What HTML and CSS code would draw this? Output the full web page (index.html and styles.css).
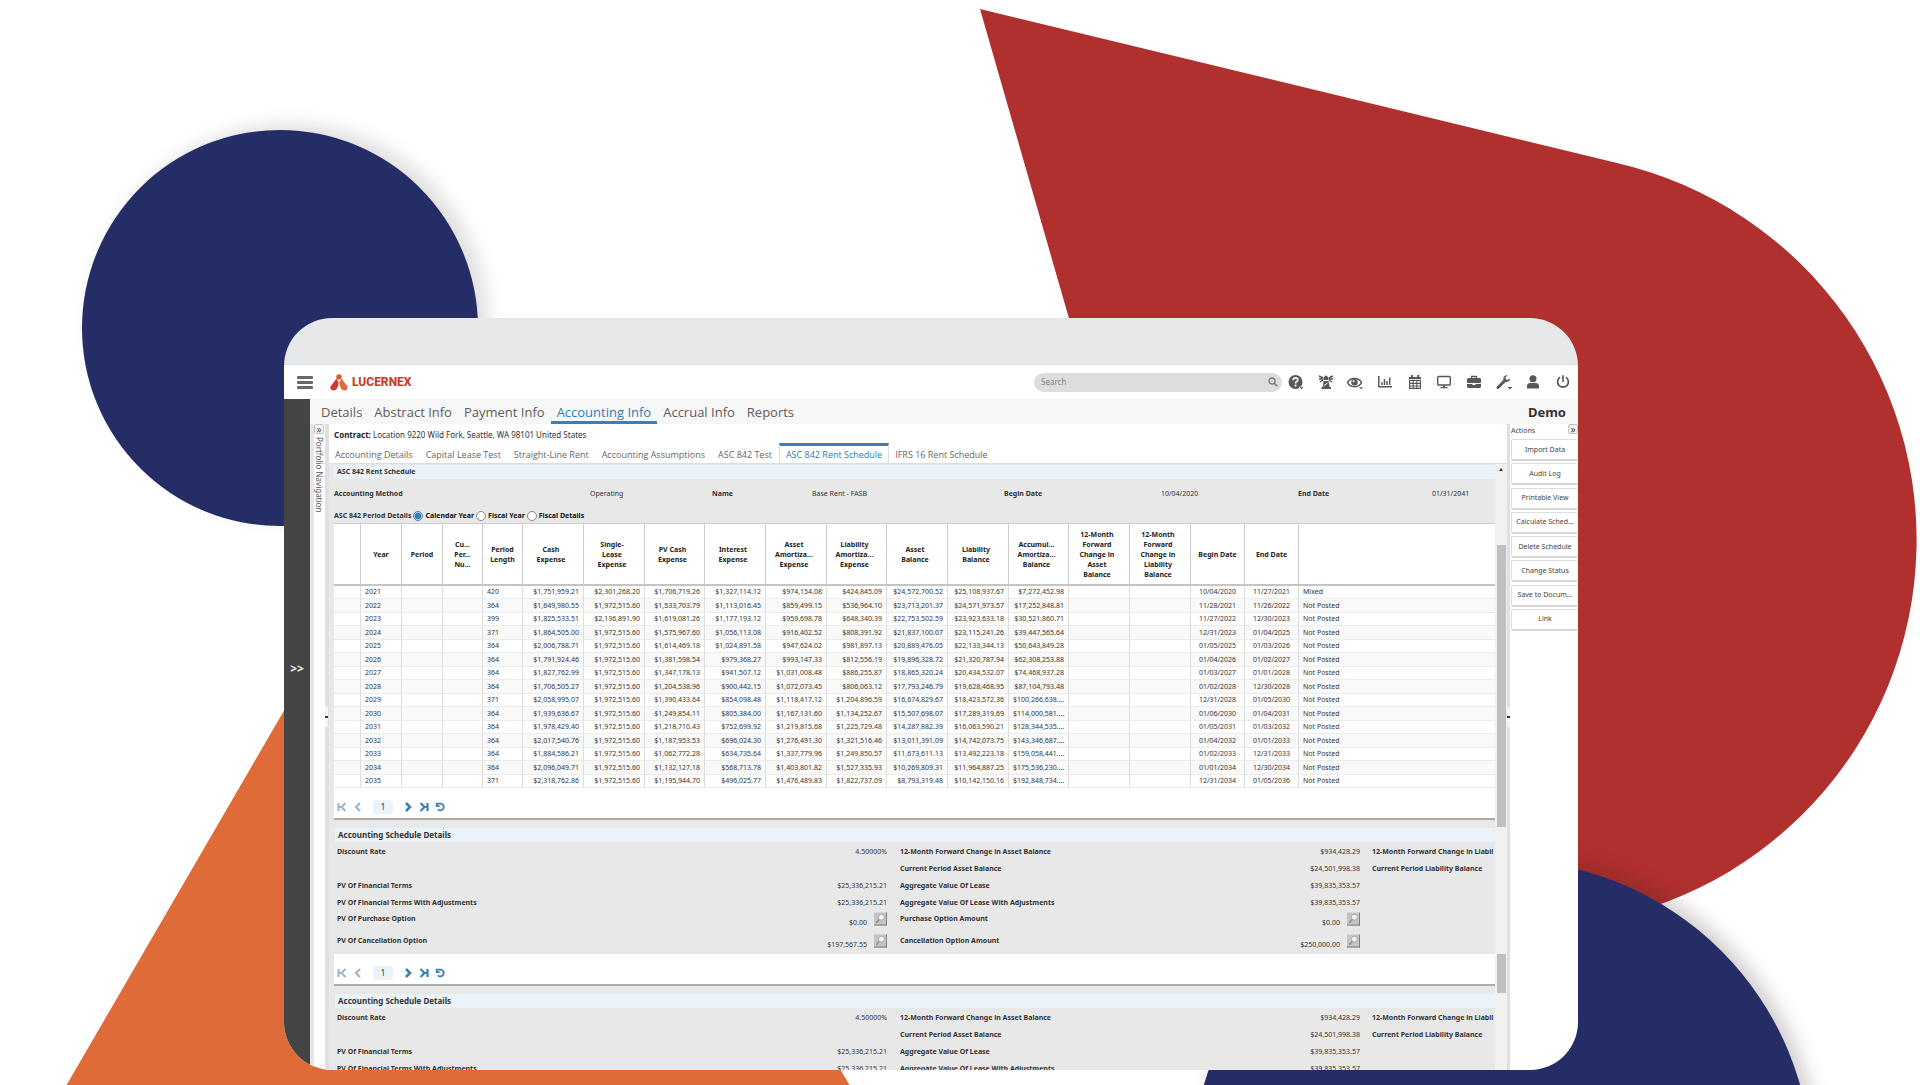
FILE: index.html
```html
<!DOCTYPE html>
<html lang="en">
<head>
<meta charset="utf-8">
<title>Lucernex – ASC 842 Rent Schedule</title>
<link rel="stylesheet" href="styles.css">
</head>
<body>
<svg class="backdrop" viewBox="0 0 1920 1085" preserveAspectRatio="xMidYMid slice" aria-hidden="true">
  <defs>
    <filter id="soft" x="-20%" y="-20%" width="140%" height="140%"><feGaussianBlur stdDeviation="9"/></filter>
  </defs>
  <circle cx="290" cy="322" r="198" fill="#3a2a2a" opacity=".15" filter="url(#soft)"/>
  <circle cx="280" cy="328" r="198" fill="#252d66"/>
  <path d="M980 9 L1617 163 A387 387 0 0 1 1529 927 L1244 927 Z" fill="#b0302e"/>
  <circle cx="1510" cy="1164" r="310" fill="#3a1a1a" opacity=".2" filter="url(#soft)"/>
  <circle cx="1502" cy="1170" r="310" fill="#252d66"/>
  <path d="M458 411 L850 1086 H66 Z" fill="#df6c38"/>
</svg>

<svg class="sprite" aria-hidden="true">
  <symbol id="i-first" viewBox="0 0 10 10"><path d="M1.5 1v8M8.5 1 4.500 5l4 4M2 5h3" fill="none" stroke="currentColor" stroke-width="2"/></symbol>
  <symbol id="i-prev" viewBox="0 0 10 10"><path d="M7 1 3 5l4 4" fill="none" stroke="currentColor" stroke-width="2.200"/></symbol>
  <symbol id="i-next" viewBox="0 0 10 10"><path d="M3 1l4 4-4 4" fill="none" stroke="currentColor" stroke-width="2.600"/></symbol>
  <symbol id="i-last" viewBox="0 0 10 10"><path d="M8.500 1v8M1.500 1l4 4-4 4M5 5h3" fill="none" stroke="currentColor" stroke-width="2.200"/></symbol>
  <symbol id="i-reload" viewBox="0 0 10 10"><path d="M.8 1.600h4.700a3.400 3.400 0 1 1-2.700 5.600M1.600.8v3.400h3" fill="none" stroke="currentColor" stroke-width="1.700"/></symbol>
  <symbol id="i-lens" viewBox="0 0 14 14"><path d="M0 0h14v14H0z" fill="#c4c4c4"/><path d="M0 13.500h14M13.500 0v14" stroke="#777"/><circle cx="8" cy="5" r="3.200" fill="#eef3f6" stroke="#9a9a9a" stroke-width=".8"/><path d="M5.600 7.600 2.500 11" stroke="#8a8a8a" stroke-width="1.500"/></symbol>
</svg>

<div class="device">
  <header class="topbar">
    <button class="menu" aria-label="Menu"><span></span><span></span><span></span></button>
    <a class="logo" href="#">
      <svg viewBox="0 0 18 17" width="18" height="17" aria-hidden="true"><circle cx="9" cy="3" r="2.800" fill="#df5a30"/><path d="M6.500 4.500 8.600 8.500C8.500 12 7 16.500 3.500 16.500 1 16.500-.2 14.500.6 12.500Z" fill="#cf3a2b"/><path d="M11.500 4.500 9.400 8.500C9.500 12 11 16.500 14.500 16.500c2.500 0 3.700-2 2.900-4Z" fill="#df6c38"/></svg>
      <span>LUCERNEX</span>
    </a>
    <label class="search">
      <input type="text" placeholder="Search" aria-label="Search">
      <svg viewBox="0 0 10 10" width="10" height="10"><circle cx="4" cy="4" r="3" fill="none" stroke="#777" stroke-width="1.300"/><path d="m6.300 6.300 3 3" stroke="#777" stroke-width="1.500"/></svg>
    </label>
    <nav class="tools" aria-label="Tools">
      <button aria-label="Help"><svg viewBox="0 0 18 16"><circle cx="8.500" cy="8" r="7" fill="#55585c"/><path d="M6.100 6.200C6.100 3 11.100 3.200 10.900 6 10.700 7.600 8.500 7.600 8.500 9.400" fill="none" stroke="#fff" stroke-width="1.700"/><circle cx="8.500" cy="11.600" r="1.100" fill="#fff"/><path d="M12 13h5l-2.500 2.500z" fill="#55585c" stroke="#fff" stroke-width=".5"/></svg></button>
      <button aria-label="Beacon"><svg viewBox="0 0 18 16"><path d="M6.500 3.500 9 1.200l2.500 2.300V6h-5zM6.500 7h5l1.200 6H14v2H4.500v-2h1.200z" fill="#55585c"/><path d="M2 2l4 2M2 5h4M3 8l3-2M16 2l-4 2M16 5h-4M15 8l-3-2" stroke="#55585c" stroke-width="1.400"/><path d="m6.500 12 4-3" stroke="#fff"/></svg></button>
      <button aria-label="View"><svg viewBox="0 0 18 16"><path d="M1.500 8.500C4 3 13 3 15.500 8.500 13 14 4 14 1.500 8.500Z" fill="#fff" stroke="#55585c" stroke-width="1.500"/><circle cx="8.500" cy="8.300" r="3.200" fill="#55585c"/><circle cx="7.600" cy="7.300" r="1" fill="#fff"/><path d="M12.500 13h5L15 15.500z" fill="#55585c" stroke="#fff" stroke-width=".5"/></svg></button>
      <button aria-label="Charts"><svg viewBox="0 0 18 16"><path d="M2.800 2v10.800H16" fill="none" stroke="#55585c" stroke-width="1.500"/><path d="M6 11V8M8.500 11V5M11 11V7M13.700 11V3.500" stroke="#55585c" stroke-width="1.500"/></svg></button>
      <button aria-label="Calendar"><svg viewBox="0 0 18 16"><path d="M3 3h12v12H3z" fill="#55585c"/><path d="M5.800 1v3M12.200 1v3" stroke="#55585c" stroke-width="2"/><path d="M4.200 7h2.500v1.700H4.200zm3.600 0h2.500v1.700H7.800zm3.600 0h2.500v1.700h-2.500zm-7.200 3h2.500v1.400H4.200zm3.600 0h2.500v1.400H7.800zm3.600 0h2.500v1.400h-2.500zm-7.200 2.500h2.500v1.300H4.200zm3.600 0h2.500v1.300H7.800zm3.600 0h2.500v1.300h-2.500zM3 5h12v.8H3z" fill="#fff"/></svg></button>
      <button aria-label="Display"><svg viewBox="0 0 18 16"><rect x="2.700" y="2.500" width="12.600" height="8.500" rx=".8" fill="none" stroke="#55585c" stroke-width="1.400"/><path d="M8 11h2v2h2.500v1.200h-7V13H8z" fill="#55585c"/></svg></button>
      <button aria-label="Portfolio"><svg viewBox="0 0 18 16"><path d="M6.500 4V2.500h5V4" fill="none" stroke="#55585c" stroke-width="1.400"/><path d="M3.500 4h11A1.500 1.500 0 0 1 16 5.500V9H2V5.500A1.500 1.500 0 0 1 3.500 4ZM2 10h5.500v1h3v-1H16v2.500a1.500 1.500 0 0 1-1.500 1.500h-11A1.500 1.500 0 0 1 2 12.500Z" fill="#55585c"/></svg></button>
      <button aria-label="Settings"><svg viewBox="0 0 18 16"><path d="m3 13.500 7-7" stroke="#55585c" stroke-width="3" stroke-linecap="round"/><path d="M14.800 4.200 12.500 6 10.700 5.200l-.2-2L12.500 1.300C9.500.8 7.500 3.500 8.600 6.200c1 2.300 4 2.400 5.400.8.800-.9 1-1.800.8-2.800Z" fill="#55585c"/><path d="M12.500 13h5L15 15.500z" fill="#55585c"/></svg></button>
      <button aria-label="Account"><svg viewBox="0 0 18 16"><circle cx="9" cy="4.800" r="3.500" fill="#55585c"/><path d="M3 14.500V12c0-2 1.500-3 3-3h6c1.500 0 3 1 3 3v2.500z" fill="#55585c"/></svg></button>
      <button aria-label="Log out"><svg viewBox="0 0 18 16"><path d="M6 3.300a5.400 5.400 0 1 0 6 0M9 1.300v6.500" fill="none" stroke="#55585c" stroke-width="1.700"/></svg></button>
    </nav>
  </header>

  <div class="body">
    <aside class="rail"><button aria-label="Expand">&gt;&gt;</button></aside>
    <div class="app">
      <nav class="tabs" aria-label="Sections">
        <a href="#">Details</a><a href="#">Abstract Info</a><a href="#">Payment Info</a><a href="#" class="active">Accounting Info</a><a href="#">Accrual Info</a><a href="#">Reports</a>
        <strong>Demo</strong>
      </nav>
      <div class="columns">
        <aside class="portfolio"><button class="fold" aria-label="Open panel">»</button><span>Portfolio Navigation</span></aside>
        <div class="splitter"><i></i></div>
        <main>
          <p class="contract"><b>Contract:</b> Location 9220 Wild Fork, Seattle, WA 98101 United States</p>
          <nav class="subtabs" aria-label="Accounting">
            <a href="#">Accounting Details</a><a href="#">Capital Lease Test</a><a href="#">Straight-Line Rent</a><a href="#">Accounting Assumptions</a><a href="#">ASC 842 Test</a><a href="#" class="active">ASC 842 Rent Schedule</a><a href="#">IFRS 16 Rent Schedule</a>
          </nav>
          <div class="workspace">
            <div class="pane">
              <h2 class="band">ASC 842 Rent Schedule</h2>
              <dl class="summary">
                <dt>Accounting Method</dt><dd>Operating</dd><dt>Name</dt><dd>Base Rent - FASB</dd><dt>Begin Date</dt><dd>10/04/2020</dd><dt>End Date</dt><dd>01/31/2041</dd>
              </dl>
              <div class="period">
                <span>ASC 842 Period Details</span>
                <label><input type="radio" name="period" checked>Calendar Year</label>
                <label><input type="radio" name="period">Fiscal Year</label>
                <label><input type="radio" name="period">Fiscal Details</label>
              </div>
              <table class="grid">
                <colgroup><col class="c-pick"><col class="c-short" span="2"><col class="c-flag" span="2"><col class="c-money" span="2"><col class="c-sum"><col class="c-money" span="2"><col class="c-sum"><col class="c-money" span="2"><col class="c-sum"><col class="c-money" span="2"><col class="c-date" span="2"><col></colgroup>
                <thead><tr><th><th>Year<th>Period<th>Cu...<br>Per...<br>Nu...<th>Period<br>Length<th>Cash<br>Expense<th>Single-<br>Lease<br>Expense<th>PV Cash<br>Expense<th>Interest<br>Expense<th>Asset<br>Amortiza...<br>Expense<th>Liability<br>Amortiza...<br>Expense<th>Asset<br>Balance<th>Liability<br>Balance<th>Accumul...<br>Amortiza...<br>Balance<th>12-Month<br>Forward<br>Change in<br>Asset<br>Balance<th>12-Month<br>Forward<br>Change in<br>Liability<br>Balance<th>Begin Date<th>End Date<th></thead>
                <tbody>
                <tr><td><td>2021<td><td><td>420<td>$1,751,959.21<td>$2,301,268.20<td>$1,706,719.26<td>$1,327,114.12<td>$974,154.08<td>$424,845.09<td>$24,572,700.52<td>$25,108,937.67<td>$7,272,452.98<td><td><td>10/04/2020<td>11/27/2021<td>Mixed
                <tr><td><td>2022<td><td><td>364<td>$1,649,980.55<td>$1,972,515.60<td>$1,533,703.79<td>$1,113,016.45<td>$859,499.15<td>$536,964.10<td>$23,713,201.37<td>$24,571,973.57<td>$17,252,848.81<td><td><td>11/28/2021<td>11/26/2022<td>Not Posted
                <tr><td><td>2023<td><td><td>399<td>$1,825,533.51<td>$2,136,891.90<td>$1,619,081.26<td>$1,177,193.12<td>$959,698.78<td>$648,340.39<td>$22,753,502.59<td>$23,923,633.18<td>$30,521,860.71<td><td><td>11/27/2022<td>12/30/2023<td>Not Posted
                <tr><td><td>2024<td><td><td>371<td>$1,864,505.00<td>$1,972,515.60<td>$1,575,967.60<td>$1,056,113.08<td>$916,402.52<td>$808,391.92<td>$21,837,100.07<td>$23,115,241.26<td>$39,447,565.64<td><td><td>12/31/2023<td>01/04/2025<td>Not Posted
                <tr><td><td>2025<td><td><td>364<td>$2,006,788.71<td>$1,972,515.60<td>$1,614,469.18<td>$1,024,891.58<td>$947,624.02<td>$981,897.13<td>$20,889,476.05<td>$22,133,344.13<td>$50,643,849.28<td><td><td>01/05/2025<td>01/03/2026<td>Not Posted
                <tr><td><td>2026<td><td><td>364<td>$1,791,924.46<td>$1,972,515.60<td>$1,381,598.54<td>$979,368.27<td>$993,147.33<td>$812,556.19<td>$19,896,328.72<td>$21,320,787.94<td>$62,308,253.88<td><td><td>01/04/2026<td>01/02/2027<td>Not Posted
                <tr><td><td>2027<td><td><td>364<td>$1,827,762.99<td>$1,972,515.60<td>$1,347,178.13<td>$941,507.12<td>$1,031,008.48<td>$886,255.87<td>$18,865,320.24<td>$20,434,532.07<td>$74,468,937.28<td><td><td>01/03/2027<td>01/01/2028<td>Not Posted
                <tr><td><td>2028<td><td><td>364<td>$1,706,505.27<td>$1,972,515.60<td>$1,204,538.96<td>$900,442.15<td>$1,072,073.45<td>$806,063.12<td>$17,793,246.79<td>$19,628,468.95<td>$87,104,793.48<td><td><td>01/02/2028<td>12/30/2028<td>Not Posted
                <tr><td><td>2029<td><td><td>371<td>$2,058,995.07<td>$1,972,515.60<td>$1,390,433.64<td>$854,098.48<td>$1,118,417.12<td>$1,204,896.59<td>$16,674,829.67<td>$18,423,572.36<td>$100,266,638....<td><td><td>12/31/2028<td>01/05/2030<td>Not Posted
                <tr><td><td>2030<td><td><td>364<td>$1,939,636.67<td>$1,972,515.60<td>$1,249,854.11<td>$805,384.00<td>$1,167,131.60<td>$1,134,252.67<td>$15,507,698.07<td>$17,289,319.69<td>$114,000,581....<td><td><td>01/06/2030<td>01/04/2031<td>Not Posted
                <tr><td><td>2031<td><td><td>364<td>$1,978,429.40<td>$1,972,515.60<td>$1,218,710.43<td>$752,699.92<td>$1,219,815.68<td>$1,225,729.48<td>$14,287,882.39<td>$16,063,590.21<td>$128,344,535....<td><td><td>01/05/2031<td>01/03/2032<td>Not Posted
                <tr><td><td>2032<td><td><td>364<td>$2,017,540.76<td>$1,972,515.60<td>$1,187,953.53<td>$696,024.30<td>$1,276,491.30<td>$1,321,516.46<td>$13,011,391.09<td>$14,742,073.75<td>$143,346,687....<td><td><td>01/04/2032<td>01/01/2033<td>Not Posted
                <tr><td><td>2033<td><td><td>364<td>$1,884,586.21<td>$1,972,515.60<td>$1,062,772.28<td>$634,735.64<td>$1,337,779.96<td>$1,249,850.57<td>$11,673,611.13<td>$13,492,223.18<td>$159,058,441....<td><td><td>01/02/2033<td>12/31/2033<td>Not Posted
                <tr><td><td>2034<td><td><td>364<td>$2,096,049.71<td>$1,972,515.60<td>$1,132,127.18<td>$568,713.78<td>$1,403,801.82<td>$1,527,335.93<td>$10,269,809.31<td>$11,964,887.25<td>$175,536,230....<td><td><td>01/01/2034<td>12/30/2034<td>Not Posted
                <tr><td><td>2035<td><td><td>371<td>$2,318,762.86<td>$1,972,515.60<td>$1,195,944.70<td>$496,025.77<td>$1,476,489.83<td>$1,822,737.09<td>$8,793,319.48<td>$10,142,150.16<td>$192,848,734....<td><td><td>12/31/2034<td>01/05/2036<td>Not Posted
                </tbody>
              </table>
              <div class="pager">
                <button disabled aria-label="First page"><svg><use href="#i-first"/></svg></button><button disabled aria-label="Previous page"><svg><use href="#i-prev"/></svg></button><span>1</span><button aria-label="Next page"><svg><use href="#i-next"/></svg></button><button aria-label="Last page"><svg><use href="#i-last"/></svg></button><button aria-label="Refresh"><svg><use href="#i-reload"/></svg></button>
              </div>

              <h2 class="band details-title">Accounting Schedule Details</h2>
              <table class="details">
                <colgroup><col><col class="d-value1"><col class="d-label2"><col class="d-value2"><col class="d-label3"></colgroup>
                <tr><th>Discount Rate<td>4.50000%<th>12-Month Forward Change in Asset Balance<td>$934,428.29<th>12-Month Forward Change in Liabil
                <tr><th><td><th>Current Period Asset Balance<td>$24,501,998.38<th>Current Period Liability Balance
                <tr><th>PV Of Financial Terms<td>$25,336,215.21<th>Aggregate Value Of Lease<td>$39,835,353.57<th>
                <tr><th>PV Of Financial Terms With Adjustments<td>$25,336,215.21<th>Aggregate Value Of Lease With Adjustments<td>$39,835,353.57<th>
                <tr class="lookup"><th>PV Of Purchase Option<td><div>$0.00<button aria-label="Look up"><svg><use href="#i-lens"/></svg></button></div><th>Purchase Option Amount<td><div>$0.00<button aria-label="Look up"><svg><use href="#i-lens"/></svg></button></div><th>
                <tr class="lookup last"><th>PV Of Cancellation Option<td><div>$197,567.55<button aria-label="Look up"><svg><use href="#i-lens"/></svg></button></div><th>Cancellation Option Amount<td><div>$250,000.00<button aria-label="Look up"><svg><use href="#i-lens"/></svg></button></div><th>
              </table>
              <div class="pager">
                <button disabled aria-label="First page"><svg><use href="#i-first"/></svg></button><button disabled aria-label="Previous page"><svg><use href="#i-prev"/></svg></button><span>1</span><button aria-label="Next page"><svg><use href="#i-next"/></svg></button><button aria-label="Last page"><svg><use href="#i-last"/></svg></button><button aria-label="Refresh"><svg><use href="#i-reload"/></svg></button>
              </div>

              <h2 class="band details-title">Accounting Schedule Details</h2>
              <table class="details">
                <colgroup><col><col class="d-value1"><col class="d-label2"><col class="d-value2"><col class="d-label3"></colgroup>
                <tr><th>Discount Rate<td>4.50000%<th>12-Month Forward Change in Asset Balance<td>$934,428.29<th>12-Month Forward Change in Liabil
                <tr><th><td><th>Current Period Asset Balance<td>$24,501,998.38<th>Current Period Liability Balance
                <tr><th>PV Of Financial Terms<td>$25,336,215.21<th>Aggregate Value Of Lease<td>$39,835,353.57<th>
                <tr><th>PV Of Financial Terms With Adjustments<td>$25,336,215.21<th>Aggregate Value Of Lease With Adjustments<td>$39,835,353.57<th>
              </table>
            </div>
            <div class="scroll" aria-hidden="true"><i class="up"></i><i class="thumb"></i><i class="thumb small"></i></div>
          </div>
        </main>
        <div class="splitter right"><i></i></div>
        <aside class="actions">
          <div class="actions-head"><span>Actions</span><button class="fold" aria-label="Collapse panel">»</button></div>
          <div class="actions-list">
            <button>Import Data</button><button>Audit Log</button><button>Printable View</button><button>Calculate Sched...</button><button>Delete Schedule</button><button>Change Status</button><button>Save to Docum...</button><button>Link</button>
          </div>
        </aside>
      </div>
    </div>
  </div>
</div>
</body>
</html>
```
FILE: styles.css
```css
* { box-sizing: border-box; }

body {
  margin: 0;
  height: 100vh;
  padding: 318px 342px 15px 284px;
  overflow: hidden;
  background: #fff;
  color: #333;
  font: 7px/10px "Noto Sans", "Open Sans", sans-serif;
}

button {
  margin: 0;
  padding: 0;
  border: 0;
  background: none;
  color: inherit;
  font: inherit;
}

a { color: inherit; text-decoration: none; }
svg { display: block; }
h2, p, dl, dd { margin: 0; }

.backdrop {
  position: absolute;
  inset: 0;
  z-index: -1;
  width: 100%;
  height: 100%;
}

.sprite { position: absolute; width: 0; height: 0; }

/* Tablet frame */
.device {
  display: flex;
  flex-direction: column;
  height: 100%;
  padding-top: 47px;
  overflow: hidden;
  border-radius: 48px;
  background: linear-gradient(#e6e8e9 46px, #d4d8d9 46px, #d4d8d9 47px, #fff 47px);
}

.topbar {
  display: flex;
  flex: none;
  align-items: center;
  height: 34px;
  padding: 0 6px 0 13px;
}

.menu { display: grid; gap: 2px; width: 16px; }
.menu span { height: 3px; border-radius: 1px; background: #66696c; }

.logo {
  display: flex;
  align-items: center;
  gap: 4px;
  margin-left: 17px;
  color: #cc3a2a;
  font: 800 12px/16px Roboto, sans-serif;
}

.search {
  display: flex;
  align-items: center;
  width: 248px;
  height: 19px;
  margin-left: auto;
  padding: 0 4px 0 7px;
  border-radius: 10px;
  background: #dcdedd;
}

.search input {
  flex: 1;
  min-width: 0;
  padding: 0;
  border: 0;
  outline: 0;
  background: none;
  font: 8px/12px "Noto Sans", sans-serif;
}
.search input::placeholder { color: #858585; opacity: 1; }

.tools {
  display: flex;
  justify-content: space-between;
  width: 285px;
  margin-left: 5px;
}
.tools svg { width: 18px; height: 16px; }

.body { display: flex; flex: 1; min-height: 0; }

.rail {
  display: grid;
  place-items: center;
  width: 26px;
  padding-bottom: 132px;
  background: #444;
  color: #fff;
  font: 700 12px/12px "Noto Sans", sans-serif;
}

.app { display: flex; flex: 1; flex-direction: column; min-width: 0; }

/* Main tabs */
.tabs {
  display: flex;
  flex: none;
  height: 25px;
  padding: 0 12px 0 5px;
  background: #f7f7f7;
  color: #5c5c5c;
  font-family: "Open Sans", sans-serif;
  font-size: 13px;
  line-height: 26px;
}
.tabs a { padding: 0 6px; }
.tabs .active { border-bottom: 3px solid #3a80b5; color: #2f7db5; }
.tabs strong { margin-left: auto; color: #333; font-family: "Noto Sans", sans-serif; }

.columns { display: flex; flex: 1; min-height: 0; }

.portfolio {
  width: 15px;
  border-left: 4px solid #e6e6e6;
  color: #555;
}
.portfolio span {
  display: block;
  margin-top: 3px;
  font-size: 8px;
  writing-mode: vertical-rl;
}

.fold {
  display: block;
  width: 10px;
  height: 10px;
  border: 1px solid #c4c4c4;
  border-radius: 2px;
  background: #f6f6f6;
  font-size: 10px;
  line-height: 6px;
}

.splitter {
  display: flex;
  align-items: center;
  width: 4px;
  padding-bottom: 60px;
  background: #e0e0e0;
}
.splitter i {
  width: 3px;
  height: 20px;
  background: linear-gradient(#f4f4f4 9px, #333 9px, #333 11px, #f4f4f4 11px);
}
.splitter.right { width: 3px; }

main { display: flex; flex: 1; flex-direction: column; min-width: 0; }

.contract {
  padding: 5px 0 0 5px;
  font-size: 8px;
  line-height: 12px;
}
.contract b { color: #222; }

.subtabs {
  display: flex;
  align-items: flex-end;
  height: 23px;
  border-bottom: 1px solid #ddd;
  color: #666;
  font-family: "Open Sans", sans-serif;
  font-size: 9px;
  line-height: 17px;
}
.subtabs a { padding: 0 7px 0 6px; }
.subtabs .active {
  padding: 0 6px;
  border: solid #ddd;
  border-width: 0 1px;
  border-top: 3px solid #3a80b5;
  background: #fff;
  color: #2f7db5;
}

.workspace { display: flex; flex: 1; min-height: 0; }

.pane {
  flex: 1;
  min-width: 0;
  padding: 1px 0 0 5px;
  overflow: hidden;
  background: #e8e8e8;
}

.band {
  padding-left: 3px;
  background: #eaf2fa;
  font-size: 7px;
  font-weight: 700;
  line-height: 14px;
}
.details-title { margin: 8px 0 0 1px; font-size: 8px; }

.summary {
  display: grid;
  grid-template-columns: 256px 122px 100px 192px 157px 137px 134px auto;
  line-height: 30px;
}
.summary dt { font-weight: 700; }

.period {
  display: flex;
  align-items: center;
  gap: 2px;
  height: 14px;
  font-weight: 700;
}
.period label { display: flex; align-items: center; gap: 2px; color: #111; }
.period input {
  appearance: none;
  width: 10px;
  height: 10px;
  margin: 0;
  border: 1px solid #888;
  border-radius: 50%;
  background: #fff;
}
.period input:checked {
  border-color: #3a80b5;
  background: radial-gradient(#3a80b5 3px, #fff 4px);
}

/* Schedule grid */
.grid {
  width: 100%;
  border-top: 1px solid #ccc;
  border-collapse: separate;
  border-spacing: 0;
  table-layout: fixed;
  background: #fff;
}
.c-pick { width: 27px; }
.c-short { width: 41px; }
.c-flag { width: 40px; }
.c-money { width: 61px; }
.c-sum { width: 60px; }
.c-date { width: 54px; }

.grid th {
  height: 62px;
  padding: 2px 4px 0 0;
  border-right: 1px solid #ccc;
  border-bottom: 2px solid #c4c4c4;
  color: #222;
  font-weight: 700;
}
.grid th:nth-child(-n+5), .grid th:nth-child(n+17) { padding-right: 0; }
.grid td {
  height: 13px;
  padding: 0 4px;
  border-right: 1px solid #ddd;
  border-bottom: 1px solid #ececec;
  line-height: 12px;
  text-align: right;
  white-space: nowrap;
}
.grid tr:nth-child(even) td { height: 14px; background: #f9f9f9; }
.grid td:nth-child(-n+5), .grid td:last-child { text-align: left; }
.grid td:nth-child(17), .grid td:nth-child(18) { text-align: center; }
.grid th:last-child, .grid td:last-child { border-right: 0; }

.pager {
  display: flex;
  align-items: center;
  height: 32px;
  padding: 7px 0 0 3px;
  border-bottom: 2px solid #aaa;
  background: #fff;
  color: #3a80b5;
}
.pager svg { width: 10px; height: 10px; }
.pager button + button { margin-left: 6px; }
.pager button:disabled { color: #9ab7cd; }
.pager span {
  width: 20px;
  margin: 0 10px;
  border-radius: 3px;
  background: #eaf2fa;
  color: #333;
  font-size: 8px;
  line-height: 14px;
  text-align: center;
}

/* Label and value pairs */
.details {
  width: 100%;
  margin-top: 1px;
  border-spacing: 0;
  table-layout: fixed;
  white-space: nowrap;
}
.d-value1 { width: 200px; }
.d-label2 { width: 285px; }
.d-value2 { width: 188px; }
.d-label3 { width: 135px; }
.details th, .details td { height: 17px; padding: 0; vertical-align: middle; }
.details th { padding-left: 13px; font-weight: 700; text-align: left; }
.details th:first-child { padding-left: 3px; }
.details th:last-child { padding-left: 12px; }
.details td { text-align: right; }
.details .lookup th, .details .lookup td { height: 21px; padding-bottom: 5px; }
.details .last th, .details .last td { height: 22px; }
.lookup div { display: flex; align-items: flex-end; justify-content: flex-end; gap: 7px; line-height: 6px; }
.lookup svg { width: 13px; height: 14px; }

.scroll {
  display: flex;
  flex-direction: column;
  align-items: center;
  width: 12px;
  background: #f1f1f1;
}
.up {
  margin: 4px 0 74px;
  border: solid transparent;
  border-width: 0 2px 3px;
  border-bottom-color: #333;
}
.thumb { width: 9px; height: 282px; background: #c0c0c0; }
.thumb.small { height: 39px; margin-top: 127px; }

.actions { width: 68px; padding-left: 1px; color: #444; }
.actions-head {
  display: flex;
  justify-content: space-between;
  height: 15px;
  font-size: 7px;
  line-height: 13px;
}
.actions-list {
  display: flex;
  flex-direction: column;
  justify-content: space-between;
  height: 192px;
}
.actions-list button {
  height: 22px;
  border: 1px solid #ddd;
  border-right: 0;
  border-bottom: 2px solid #d6d6d6;
  border-radius: 2px;
  background: #fff;
}
```
